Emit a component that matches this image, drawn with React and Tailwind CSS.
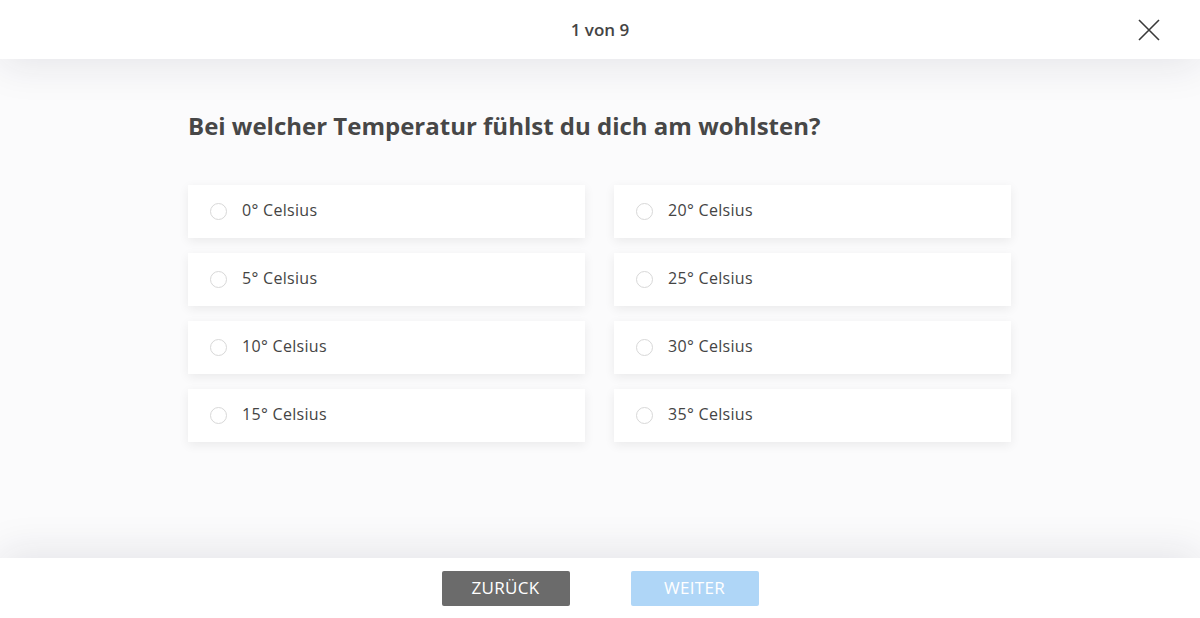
import React, { useState } from 'react';

const options = [
    '0° Celsius', '20° Celsius',
    '5° Celsius', '25° Celsius',
    '10° Celsius', '30° Celsius',
    '15° Celsius', '35° Celsius',
];

const CloseIcon = () => (
    <svg width="22" height="22" viewBox="0 0 22 22" fill="none" stroke="#3a3a3a" strokeWidth="1.6">
        <path d="M1 1L21 21M21 1L1 21" />
    </svg>
);

const App = () => {
    const [selected, setSelected] = useState(null);

    return (
        <div className="h-screen flex flex-col bg-[#fbfbfc]" style={{ fontFamily: '"Open Sans", sans-serif' }}>
            <header className="relative z-10 h-[59px] bg-white flex items-center justify-center shadow-[0_6px_40px_rgba(30,30,60,0.10)]">
                <span className="text-[17px] font-semibold text-[#444]">1 von 9</span>
                <button className="absolute right-[40px] top-[19px]">
                    <CloseIcon />
                </button>
            </header>

            <main className="flex-1 px-[188px] pt-[49px]">
                <h1 className="text-[24px] font-bold text-[#474747] leading-[36px]">
                    Bei welcher Temperatur fühlst du dich am wohlsten?
                </h1>
                <div className="mt-[41px] grid grid-cols-[397px_397px] gap-x-[29px] gap-y-[15px]">
                    {options.map((label) => (
                        <button
                            key={label}
                            onClick={() => setSelected(label)}
                            className="flex items-center h-[53px] bg-white shadow-[0_3px_10px_rgba(0,0,0,0.07)] text-left"
                        >
                            <span className={`ml-[22px] w-[17px] h-[17px] rounded-full border ${selected === label ? 'border-[#7ab8ee] border-[5px]' : 'border-[#d8d8d8]'}`}></span>
                            <span className="ml-[15px] -mt-[3px] text-[16px] tracking-[0.3px] text-[#444]">{label}</span>
                        </button>
                    ))}
                </div>
            </main>

            <footer className="relative z-10 h-[60px] bg-white flex items-center justify-center gap-[61px] shadow-[0_-6px_40px_rgba(30,30,60,0.10)]">
                <button className="w-[128px] h-[35px] rounded-[2px] bg-[#6b6b6b] text-white text-[17px] tracking-[0.3px]">
                    ZURÜCK
                </button>
                <button className="w-[128px] h-[35px] rounded-[2px] bg-[#afd6f7] text-white text-[17px] tracking-[0.3px]">
                    WEITER
                </button>
            </footer>
        </div>
    );
};

export default App;
